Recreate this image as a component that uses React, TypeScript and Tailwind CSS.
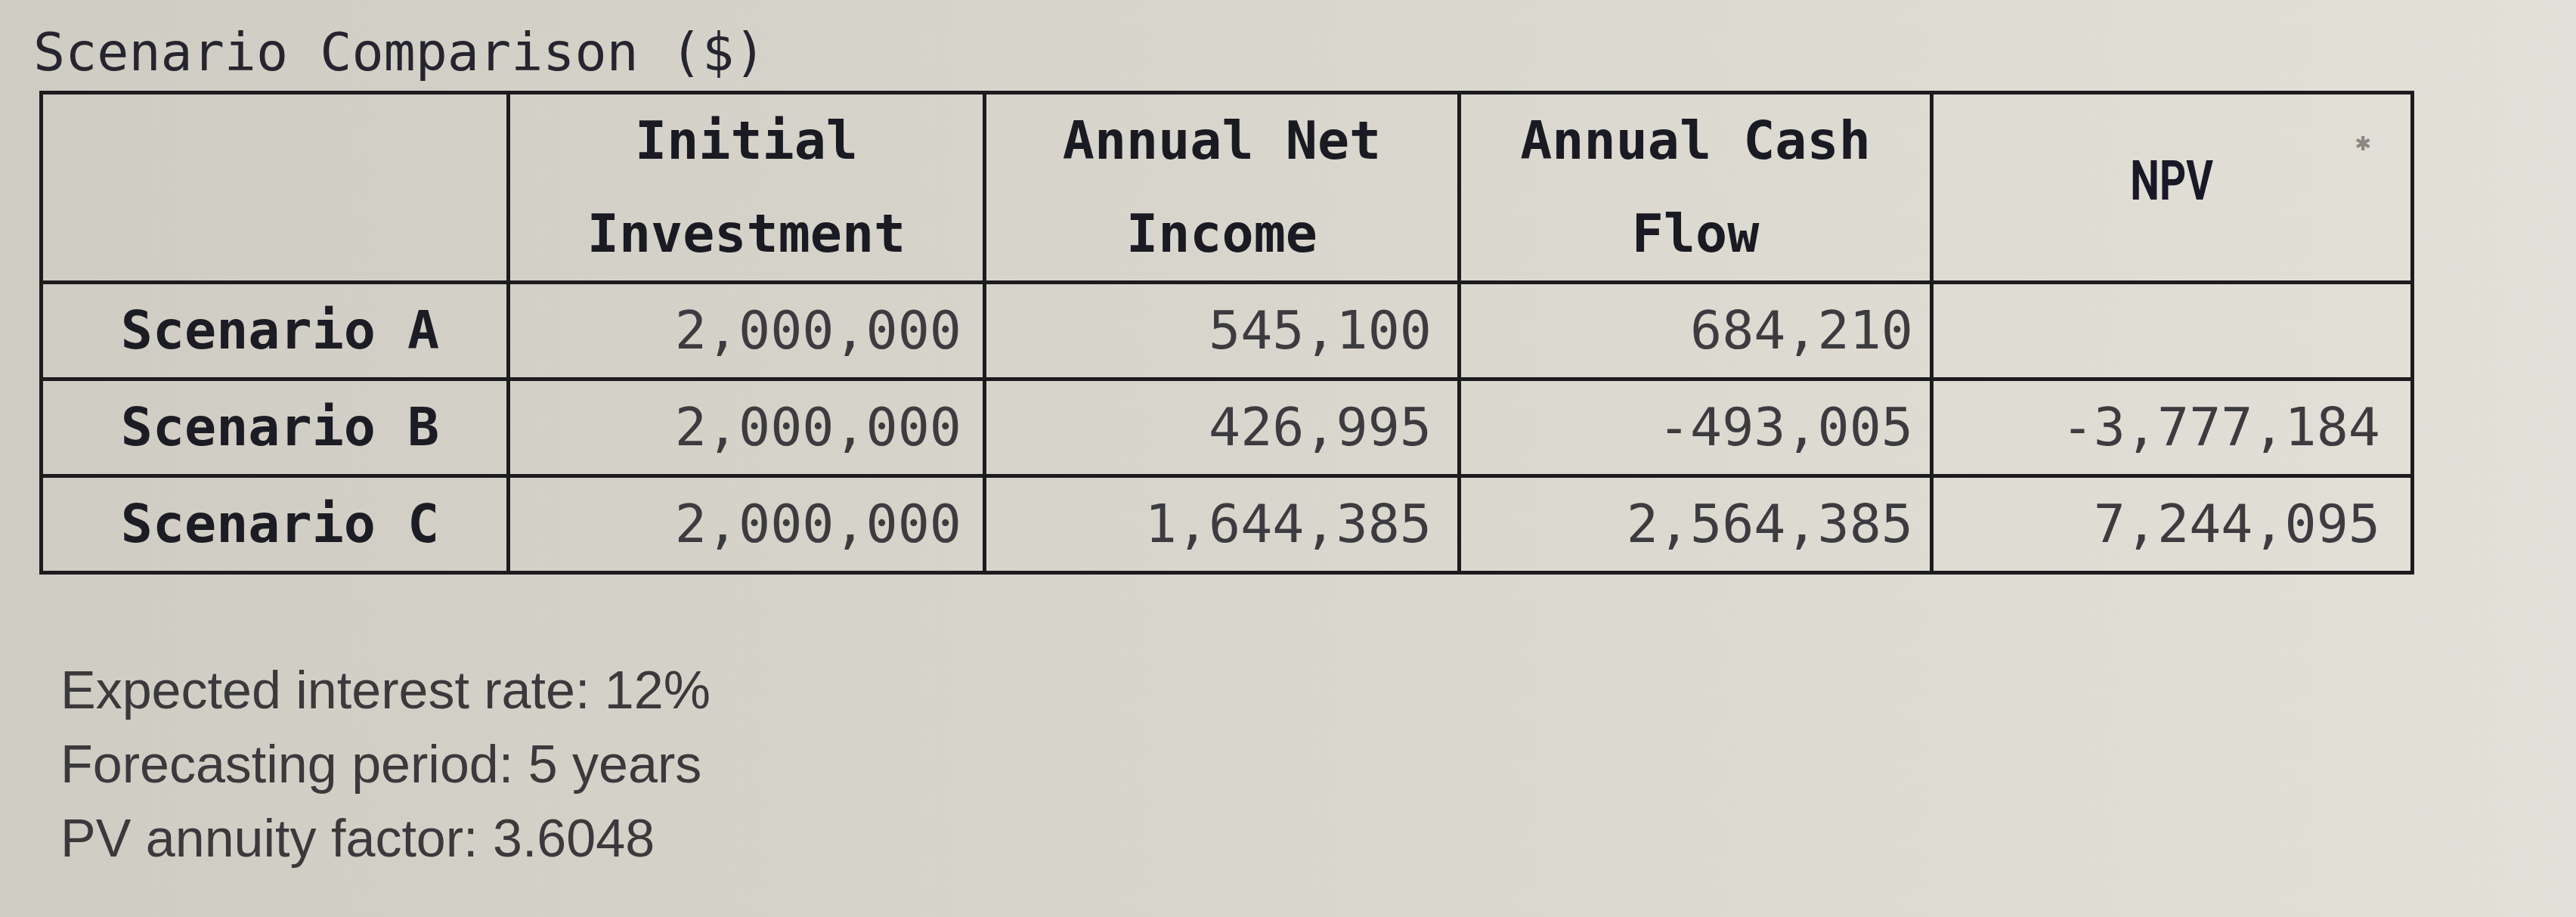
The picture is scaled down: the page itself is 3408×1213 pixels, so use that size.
import React from "react";

const mono = "font-['DejaVu_Sans_Mono','Liberation_Mono',monospace]";

const rows = [
  { label: "Scenario A", inv: "2,000,000", inc: "545,100", cf: "684,210", npv: "" },
  { label: "Scenario B", inv: "2,000,000", inc: "426,995", cf: "-493,005", npv: "-3,777,184" },
  { label: "Scenario C", inv: "2,000,000", inc: "1,644,385", cf: "2,564,385", npv: "7,244,095" },
];

export default function App() {
  return (
    <div className="w-[3408px] h-[1213px] overflow-hidden bg-linear-to-r from-[#cfccc3] via-[#d9d6cd] to-[#e3e0d9] pt-[34px]">
      <h1 className={`${mono} ml-[44px] text-[70px] leading-[70px] font-normal text-[#25252f]`}>
        Scenario Comparison ($)
      </h1>
      <table className={`${mono} mt-[16px] ml-[52px] w-[3137px] table-fixed border-collapse border-[5px] border-[#1c1c1f] text-[70px] leading-[123px]`}>
        <colgroup>
          <col className="w-[618px]" />
          <col className="w-[630px]" />
          <col className="w-[628px]" />
          <col className="w-[625px]" />
          <col className="w-[636px]" />
        </colgroup>
        <thead>
          <tr className="text-[#1a1a22] font-bold">
            <th className="border-[5px] border-[#1c1c1f] p-0"></th>
            <th className="border-[5px] border-[#1c1c1f] p-0 text-center font-bold">
              Initial
              <br />
              Investment
            </th>
            <th className="border-[5px] border-[#1c1c1f] p-0 text-center font-bold">
              Annual Net
              <br />
              Income
            </th>
            <th className="border-[5px] border-[#1c1c1f] p-0 text-center font-bold">
              Annual Cash
              <br />
              Flow
            </th>
            <th className="relative border-[5px] border-[#1c1c1f] p-0 text-center">
              <span className="inline-block scale-x-[0.76] font-['Roboto','Liberation_Sans',sans-serif] text-[72px] font-bold leading-none text-[#181826] translate-y-[-8px]">
                NPV
              </span>
              <span className="absolute right-[52px] top-[52px] font-['DejaVu_Sans',sans-serif] text-[26px] leading-none text-[#8c8782]">
                ✱
              </span>
            </th>
          </tr>
        </thead>
        <tbody>
          {rows.map((r) => (
            <tr key={r.label}>
              <td className="border-[5px] border-[#1c1c1f] p-0 pl-[14px] text-center font-bold text-[#1c1c24]">
                {r.label}
              </td>
              <td className="border-[5px] border-[#1c1c1f] p-0 pr-[28px] text-right text-[#3c3c40]">
                {r.inv}
              </td>
              <td className="border-[5px] border-[#1c1c1f] p-0 pr-[34px] text-right text-[#3c3c40]">
                {r.inc}
              </td>
              <td className="border-[5px] border-[#1c1c1f] p-0 pr-[22px] text-right text-[#3c3c40]">
                {r.cf}
              </td>
              <td className="border-[5px] border-[#1c1c1f] p-0 pr-[40px] text-right text-[#3c3c40]">
                {r.npv}
              </td>
            </tr>
          ))}
        </tbody>
      </table>
      <div className="mt-[104px] ml-[80px] font-['Liberation_Sans','Arial',sans-serif] text-[70px] leading-[98px] text-[#3a3a3c]">
        <p>Expected interest rate: 12%</p>
        <p>Forecasting period: 5 years</p>
        <p>PV annuity factor: 3.6048</p>
      </div>
    </div>
  );
}
